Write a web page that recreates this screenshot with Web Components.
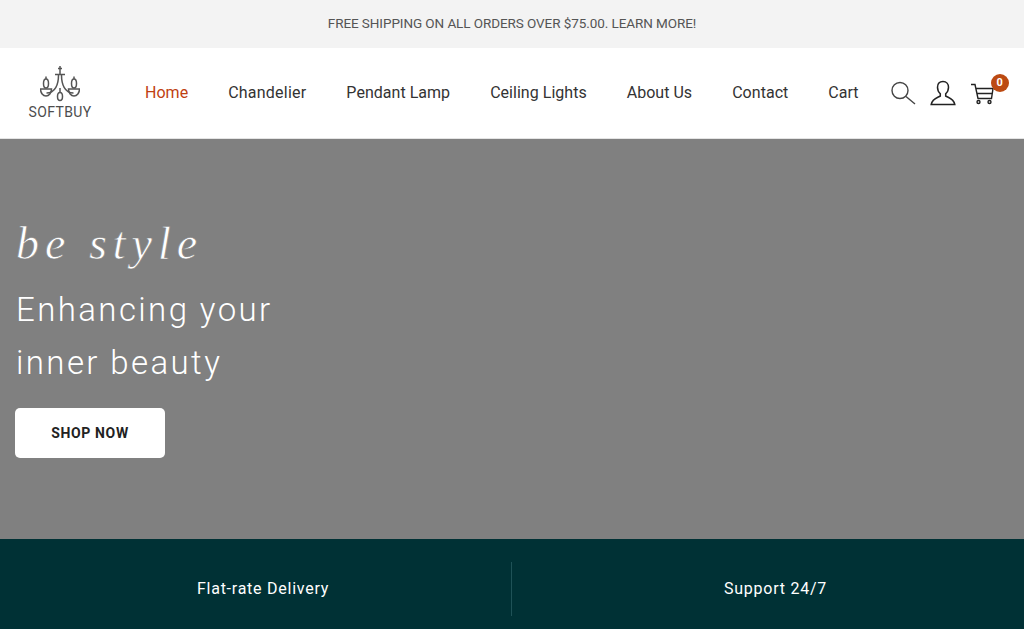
<!DOCTYPE html>
<html>
<head>
<meta charset="utf-8">
<title>Softbuy</title>
<style>
html, body { margin: 0; padding: 0; }
body { font-family: Roboto, "Liberation Sans", sans-serif; overflow: hidden; height: 629px; }
</style>
</head>
<body>
<promo-bar>FREE SHIPPING ON ALL ORDERS OVER $75.00. LEARN MORE!</promo-bar>
<site-header></site-header>
<hero-banner></hero-banner>
<feature-strip>
  <feature-item>Flat-rate Delivery</feature-item>
  <feature-item>Support 24/7</feature-item>
</feature-strip>

<script>
class PromoBar extends HTMLElement {
    constructor(){
        super();
        this.attachShadow({mode: 'open'}).innerHTML = `
        <style>
        :host {
            display: flex;
            height: 48px;
            box-sizing: border-box;
            padding-bottom: 1px;
            align-items: center;
            justify-content: center;
            background: #f3f3f3;
            color: #555;
            font: 13.5px/1 Roboto, sans-serif;
            letter-spacing: -.08px;
        }
        </style>
        <slot></slot>`;
    }
}

class SiteLogo extends HTMLElement {
    constructor(){
        super();
        this.attachShadow({mode: 'open'}).innerHTML = `
        <style>
        :host {
            display: flex;
            flex-direction: column;
            align-items: center;
            width: 64px;
            color: #4d4d4d;
        }
        svg { display: block; }
        span {
            font: 14px/14px Roboto, sans-serif;
            letter-spacing: .35px;
            margin-top: 3px;
        }
        </style>
        <svg width="40" height="36" viewBox="0 0 40 36" fill="none" stroke="#555" stroke-width="1.5">
            <path d="M20 0v8M18 2.500h4M15 8.500h10"/>
            <path d="M18.500 9c0 9-3 18-12 18M21.500 9c0 9 3 18 12 18"/>
            <path d="M.5 23h11c0 4-2.500 7-5.500 7S.5 27 .5 23zM28.500 23h11c0 4-2.500 7-5.500 7s-5.500-3-5.500-7z"/>
            <ellipse cx="6" cy="17.500" rx="2.500" ry="4.500"/>
            <ellipse cx="34" cy="17.500" rx="2.500" ry="4.500"/>
            <ellipse cx="20" cy="30.500" rx="2.500" ry="4"/>
            <path d="M6 10.500v2.500M34 10.500v2.500M20 22v4.500"/>
        </svg>
        <span>SOFTBUY</span>`;
    }
}

class NavLink extends HTMLElement {
    constructor(){
        super();
        this.attachShadow({mode: 'open'}).innerHTML = `
        <style>
        :host {
            display: block;
            font: 16px/1 Roboto, sans-serif;
            letter-spacing: .03px;
            color: #333;
            white-space: nowrap;
        }
        :host([active]) { color: #bf3f12; }
        </style>
        <slot></slot>`;
    }
}

class SiteHeader extends HTMLElement {
    constructor(){
        super();
        this.attachShadow({mode: 'open'}).innerHTML = `
        <style>
        :host {
            display: flex;
            height: 91px;
            box-sizing: border-box;
            align-items: center;
            background: #fff;
            border-bottom: 1px solid #e4e4e4;
            padding: 0 14px 1px 28px;
        }
        site-logo { margin-right: 53px; }
        nav { display: flex; gap: 40px; }
        .icons {
            display: flex;
            align-items: center;
            gap: 14px;
            margin-left: 31px;
        }
        .cart { position: relative; display: flex; }
        .badge {
            position: absolute;
            top: -6px;
            right: -13px;
            width: 18px;
            height: 18px;
            border-radius: 50%;
            background: #bc4a12;
            color: #fff;
            font: bold 11px/18px Roboto, sans-serif;
            text-align: center;
        }
        svg { display: block; }
        </style>
        <site-logo></site-logo>
        <nav>
            <nav-link active>Home</nav-link>
            <nav-link style="letter-spacing: .22px">Chandelier</nav-link>
            <nav-link>Pendant Lamp</nav-link>
            <nav-link>Ceiling Lights</nav-link>
            <nav-link>About Us</nav-link>
            <nav-link>Contact</nav-link>
            <nav-link>Cart</nav-link>
        </nav>
        <div class="icons">
            <svg width="26" height="26" viewBox="0 0 26 26" fill="none" stroke="#444" stroke-width="1.4">
                <circle cx="10" cy="10.500" r="8"/><path d="M16 16.500l9 7.500"/>
            </svg>
            <svg width="26" height="26" viewBox="0 0 26 26" fill="none" stroke="#222" stroke-width="1.5">
                <path d="M13 1.500c-3.600 0-5.500 2.600-5.500 5.800 0 2.800 1.200 5 2.800 6.400v2.300c-2.500 1.600-8.100 2.700-9.100 8.500h23.600c-1-5.800-6.600-6.900-9.100-8.500v-2.300c1.600-1.400 2.800-3.600 2.800-6.400 0-3.200-1.900-5.800-5.500-5.800z"/>
            </svg>
            <div class="cart">
                <svg width="26" height="26" viewBox="0 0 26 26" fill="none" stroke="#222" stroke-width="1.4">
                    <path d="M1 4.500h4l3 14h13.500l1.500-10H5.800M7 13.500h15"/>
                    <circle cx="8.500" cy="22" r="1.500"/><circle cx="19.500" cy="22" r="1.500"/>
                </svg>
                <span class="badge">0</span>
            </div>
        </div>`;
    }
}

class HeroBanner extends HTMLElement {
    constructor(){
        super();
        this.attachShadow({mode: 'open'}).innerHTML = `
        <style>
        :host {
            display: flex;
            flex-direction: column;
            align-items: flex-start;
            height: 400px;
            box-sizing: border-box;
            padding: 76px 15px 0;
            background: #808080;
            color: #fff;
        }
        .script {
            font: italic 46px/58px "Liberation Serif", serif;
            letter-spacing: 6px;
            margin-left: 1px;
            -webkit-text-stroke: .6px #808080;
        }
        h1 {
            margin: 10px 0 19px 1px;
            font: 300 33px/53px Roboto, sans-serif;
            letter-spacing: 2.400px;
        }
        a {
            display: block;
            width: 150px;
            height: 50px;
            border-radius: 5px;
            background: #fff;
            color: #222;
            font: bold 14px/50px Roboto, sans-serif;
            letter-spacing: .650px;
            text-align: center;
        }
        </style>
        <div class="script">be style</div>
        <h1>Enhancing your<br>inner beauty</h1>
        <a>SHOP NOW</a>`;
    }
}

class FeatureStrip extends HTMLElement {
    constructor(){
        super();
        this.attachShadow({mode: 'open'}).innerHTML = `
        <style>
        :host {
            display: grid;
            grid-template-columns: 1fr 1fr;
            height: 90px;
            box-sizing: border-box;
            padding-top: 10px;
            align-items: center;
            background: #003135;
        }
        </style>
        <slot></slot>`;
    }
}

class FeatureItem extends HTMLElement {
    constructor(){
        super();
        this.attachShadow({mode: 'open'}).innerHTML = `
        <style>
        :host {
            display: flex;
            height: 54px;
            box-sizing: border-box;
            padding-left: 15px;
            align-items: center;
            justify-content: center;
            color: #fff;
            font: 16px/1 Roboto, sans-serif;
            letter-spacing: .75px;
        }
        :host(:first-child) { border-right: 1px solid #1f5257; }
        </style>
        <slot></slot>`;
    }
}

customElements.define('promo-bar', PromoBar);
customElements.define('site-logo', SiteLogo);
customElements.define('nav-link', NavLink);
customElements.define('site-header', SiteHeader);
customElements.define('hero-banner', HeroBanner);
customElements.define('feature-strip', FeatureStrip);
customElements.define('feature-item', FeatureItem);
</script>
</body>
</html>
